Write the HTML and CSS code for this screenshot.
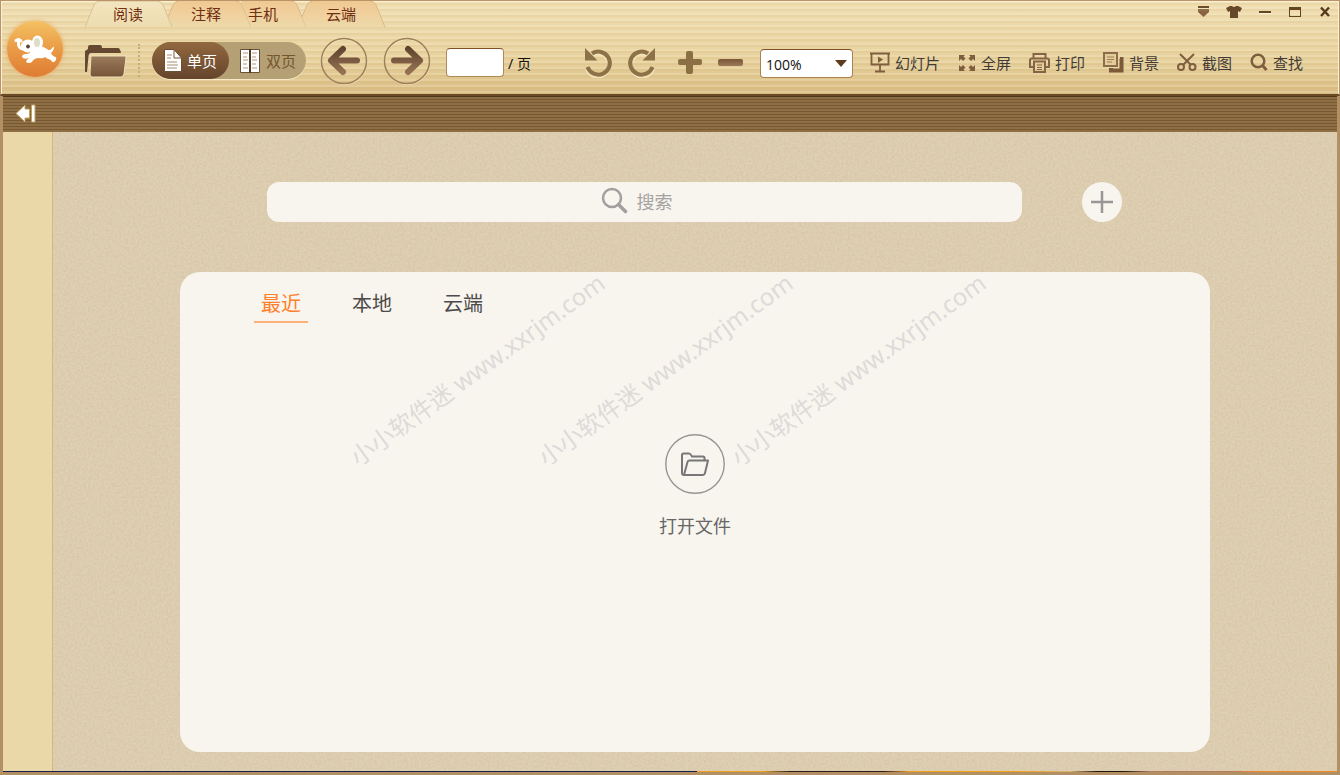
FILE: index.html
```html
<!DOCTYPE html>
<html lang="zh-CN">
<head>
<meta charset="utf-8">
<title>阅读</title>
<link rel="stylesheet" href="styles.css">
</head>
<body>
<div class="window">
  <header class="header">
    <button class="logo" aria-label="主菜单">
      <svg width="44" height="44" viewBox="0 0 44 44" fill="#fff">
        <path d="M3 13.500Q7 11.500 8 14M5.500 14Q4.500 22 11 22" fill="none" stroke="#fff" stroke-width="3" stroke-linecap="round" stroke-linejoin="round"/>
        <ellipse cx="15" cy="19" rx="7" ry="6.500"/>
        <path d="M20 20 Q28 17 34 22 Q37 25 40 20 Q41 19 41 21 Q40 25 38 26 Q40 30 43 30 Q44 33 41 35 Q39 36 38 33 Q34 32 32 30 Q30 32 26 31 Q21 31 19 35 Q16 37 13 35 Q13 33 16 31 Q11 33 9 30 Q9 27 13 27 Q17 27 18 24Z"/>
        <ellipse cx="24.500" cy="15.500" rx="5.500" ry="7"/>
        <ellipse cx="24" cy="15.500" rx="3" ry="4.500" fill="#dfdcc8"/>
        <circle cx="15" cy="19.500" r="1.900" fill="#5a4636"/>
      </svg>
    </button>
    <div class="header-main">
      <div class="title-row">
        <nav class="tabs">
          <button class="tab tab-read"><svg class="tab-shape" viewBox="0 0 88 26" preserveAspectRatio="none"><path d="M0 26 L9 4 Q11 0 15 0 H72 Q76 0 78 4 L87 26" fill="url(#tabLight)" stroke="#d9c295"/></svg><span>阅读</span></button>
          <button class="tab tab-note"><svg class="tab-shape" viewBox="0 0 84 26" preserveAspectRatio="none"><path d="M0 16 L5 4 Q7 0 11 0 H68 Q72 0 74 4 L83 26 H4Z" fill="url(#tabWarm)"/><path d="M0 16 L5 4 Q7 0 11 0 M68 0 Q72 0 74 4 L83 26" fill="none" stroke="#d9b98a"/></svg><span>注释</span></button>
          <button class="tab tab-phone"><svg class="tab-shape" viewBox="0 0 66 26" preserveAspectRatio="none"><path d="M0 0 H50 Q54 0 56 4 L65 26 H10Z" fill="url(#tabWarm)"/><path d="M50 0 Q54 0 56 4 L65 26" fill="none" stroke="#d9b98a"/></svg><span>手机</span></button>
          <button class="tab tab-cloud"><svg class="tab-shape" viewBox="0 0 84 26" preserveAspectRatio="none"><path d="M0 16 L5 4 Q7 0 11 0 H68 Q72 0 74 4 L83 26 H4Z" fill="url(#tabWarm)"/><path d="M0 16 L5 4 Q7 0 11 0 M68 0 Q72 0 74 4 L83 26" fill="none" stroke="#d9b98a"/></svg><span>云端</span></button>
        </nav>
        <div class="window-controls">
          <button aria-label="菜单"><svg width="14" height="14" viewBox="0 0 14 14"><path d="M2 1h11v2H2z" fill="#6c4c2e"/><path d="M2 4h11v2H2z" fill="#8f6c48"/><path d="M2 6h11v1L7.500 12 2 7z" fill="#8a6442"/></svg></button>
          <button aria-label="皮肤"><svg width="16" height="14" viewBox="0 0 16 14"><path d="M0 3 4 1h2q2 2 4 0h2l4 2-2 4-2-1v7H4V6L2 7z" fill="#67482a"/></svg></button>
          <button aria-label="最小化"><svg width="14" height="14" viewBox="0 0 14 14"><path d="M1 6h12v2H1z" fill="#63451f"/><path d="M1 8h12v1H1z" fill="#fff4d8"/></svg></button>
          <button aria-label="最大化"><svg width="14" height="14" viewBox="0 0 14 14"><path d="M1 2h12v10H1zM2 5v6h10V5z" fill="#63451f" fill-rule="evenodd"/></svg></button>
          <button aria-label="关闭"><svg width="14" height="14" viewBox="0 0 14 14"><path d="M3 2.500 11 11M11 2.500 3 11" stroke="#573a1c" stroke-width="2.500"/></svg></button>
        </div>
      </div>
      <div class="toolbar">
        <button class="folder" aria-label="打开">
          <svg width="42" height="34" viewBox="0 0 42 34"><path d="M0 28V7L3 5V3Q3 1 5 1H15Q17 1 17 4H33Q35 4 36 9H6Q4 9 3.500 12L2 28Z" fill="#664730"/><path d="M6 12H40Q41 12 41 14L39 30Q38 33 36 33H7Q5 33 5 30Z" fill="url(#folderFront)" stroke="#f0dfba" stroke-width="1"/></svg>
        </button>
        <span class="divider"></span>
        <div class="page-mode">
          <button class="mode mode-active"><svg width="18" height="24" viewBox="0 0 18 24"><path d="M.500.500H10L17.500 9V22.500H.500Z" fill="#fff" stroke="#6a4f34"/><path d="M10 1V9H17" fill="none" stroke="#765637"/><path d="M3 6h5M3 9h4M3 13h10M3 16h11M3 19h10" stroke="#a58c73"/></svg><span>单页</span></button>
          <button class="mode"><svg width="20" height="24" viewBox="0 0 20 24"><path d="M.500.500H19.500V23.500H.500Z" fill="#fff" stroke="#6a4f34"/><path d="M10 0v24" stroke="#4d3a25" stroke-width="2"/><path d="M3 4h5M3 8h4M3 11h5M3 15h4M3 19h5M12 4h5M12 8h4M12 11h5M12 15h4M12 19h5" stroke="#b5947a"/></svg><span>双页</span></button>
        </div>
        <button class="round" aria-label="上一页"><svg width="48" height="48" viewBox="0 0 48 48" fill="none"><circle cx="24.500" cy="25" r="22.500" stroke="#f6e5bd"/><circle cx="24" cy="24" r="22.500" stroke="#9d8058" stroke-width="1.500"/><path d="M23 12 11 23.500 23 35M11 23.500H37" stroke="url(#arrowFill)" stroke-width="6" stroke-linecap="round" stroke-linejoin="round"/></svg></button>
        <button class="round" aria-label="下一页"><svg width="48" height="48" viewBox="0 0 48 48" fill="none"><circle cx="24.500" cy="25" r="22.500" stroke="#f6e5bd"/><circle cx="24" cy="24" r="22.500" stroke="#9d8058" stroke-width="1.500"/><path d="M25 12 37 23.500 25 35M37 23.500H11" stroke="url(#arrowFill)" stroke-width="6" stroke-linecap="round" stroke-linejoin="round"/></svg></button>
        <label class="page-number"><input type="text" aria-label="页码"><span>/ 页</span></label>
        <div class="edit-tools">
          <button aria-label="向左旋转"><svg width="30" height="30" viewBox="0 0 30 30"><path d="M8 7A11.500 11.500 0 1 1 3 21" fill="none" stroke="#f3e2b8" stroke-width="4"/><path d="M8 5.500A11.500 11.500 0 1 1 3.500 19" fill="none" stroke="#8d7247" stroke-width="4"/><path d="M1 0V12.500H13.500Z" fill="#8d7247"/></svg></button>
          <button aria-label="向右旋转"><svg width="30" height="30" viewBox="0 0 30 30"><path d="M22 7A11.500 11.500 0 1 0 27 21" fill="none" stroke="#f3e2b8" stroke-width="4"/><path d="M22 5.500A11.500 11.500 0 1 0 26.500 19" fill="none" stroke="#8d7247" stroke-width="4"/><path d="M29 0V12.500H16.500Z" fill="#8d7247"/></svg></button>
        </div>
        <div class="zoom-tools">
          <button aria-label="放大"><svg width="26" height="26" viewBox="0 0 26 26"><path d="M11 2h3q2 0 2 2v6h7q2 0 2 2v2q0 2-2 2h-7v7q0 2-2 2h-3q-2 0-2-2v-7H3q-2 0-2-2v-2q0-2 2-2h6V4q0-2 2-2z" fill="#8c7045"/></svg></button>
          <button aria-label="缩小"><svg width="26" height="26" viewBox="0 0 26 26"><rect x="1" y="10" width="25" height="7" rx="2" fill="url(#minusFill)"/></svg></button>
        </div>
        <div class="select-wrap"><select class="zoom-select" aria-label="缩放"><option>100%</option></select><svg class="caret" width="12" height="7" viewBox="0 0 12 7"><path d="M0 0H12L6 7Z" fill="#5c3b1e"/></svg></div>
        <div class="actions">
          <button><svg width="20" height="21" viewBox="0 0 20 21" fill="none" stroke="#7f5e3f"><path d="M0 1.500H20" stroke-width="2"/><path d="M1.500 2V12.500H18.500V2M10 13V19M5 19.500H15" stroke-width="1.800"/><path d="M8 4.500 13 7.500 8 11Z" fill="#7f5e3f" stroke="none"/></svg><span>幻灯片</span></button>
          <button><svg width="18" height="18" viewBox="0 0 18 18" fill="#7f5e3f"><path d="M1 1h6L5.500 2.500 7.500 4.500 5 7 3 5 1 7zM17 1h-6l1.500 1.500L10.500 4.500 13 7l2-2 2 2zM1 17h6l-1.500-1.500L7.500 13.500 5 11 3 13 1 11zM17 17h-6l1.500-1.500L10.500 13.500 13 11l2 2 2-2z"/></svg><span>全屏</span></button>
          <button><svg width="21" height="20" viewBox="0 0 21 20" fill="none" stroke="#866546" stroke-width="1.600"><path d="M4.500 5V1H16.500V5M4.500 14H1V7Q1 5.500 3 5.500H18Q20 5.500 20 7V14H16.500M4 8.500H17M5 9V19H16V9" stroke-width="2"/><path d="M8 12H13M8 14.500H13M8 16.500H13" stroke-width="1"/></svg><span>打印</span></button>
          <button><svg width="21" height="21" viewBox="0 0 21 21" fill="none"><path d="M17 7H18.500V18.500H8V16" stroke="#7b5939" stroke-width="4"/><rect x="1" y="1" width="13" height="13" fill="#e3cc98" stroke="#8e6d4c" stroke-width="2"/><path d="M4 5H11M4 7.500H11M4 10H9" stroke="#9d805e"/></svg><span>背景</span></button>
          <button><svg width="20" height="19" viewBox="0 0 20 19" fill="none" stroke="#7f5e3f" stroke-width="2"><path d="M3 1 14 12M17 1 6 12"/><circle cx="4" cy="14" r="3"/><circle cx="15.500" cy="14" r="3"/></svg><span>截图</span></button>
          <button><svg width="18" height="19" viewBox="0 0 18 19" fill="none" stroke="#7f5e3f"><circle cx="8" cy="8" r="6.300" stroke-width="2.500"/><path d="M12.500 12.500 16.500 17" stroke-width="3"/></svg><span>查找</span></button>
        </div>
      </div>
    </div>
  </header>
  <div class="body">
    <div class="strip"><button class="collapse" aria-label="收起"><svg width="21" height="19" viewBox="0 0 21 19"><path d="M1 9.500 10 1V5H14.500V14H10V18ZM16.500 1h3.500v17h-3.500z" fill="#fff" stroke="#c3a15e" stroke-width="1"/></svg></button></div>
    <div class="content">
      <aside class="sidebar"></aside>
      <main class="workspace">
        <svg class="grain"><filter id="grain"><feTurbulence type="fractalNoise" baseFrequency=".45" numOctaves="2" seed="4"/><feColorMatrix values="0 0 0 0 .45  0 0 0 0 .32  0 0 0 0 .16  .9 0 0 0 -.3"/></filter><rect width="100%" height="100%" filter="url(#grain)"/></svg>
        <div class="search-row">
          <label class="search"><svg width="27" height="30" viewBox="0 0 27 30" fill="none" stroke="#a1a09e"><circle cx="11" cy="11" r="9" stroke-width="2.500"/><path d="M17.500 17.500 24.500 24.500" stroke-width="3.500" stroke-linecap="round"/></svg><input type="text" placeholder="搜索" aria-label="搜索"></label>
          <button class="add" aria-label="添加"><svg width="24" height="24" viewBox="0 0 24 24"><path d="M12 1V23M1 12H23" stroke="#999795" stroke-width="2.500"/></svg></button>
        </div>
        <section class="panel">
          <nav class="file-tabs">
            <button class="file-tab current">最近</button>
            <button class="file-tab">本地</button>
            <button class="file-tab">云端</button>
          </nav>
          <button class="open-file">
            <svg width="60" height="60" viewBox="0 0 60 60" fill="none" stroke="#777"><circle cx="30" cy="30" r="29.200" stroke="#969593" stroke-width="1.400"/><path d="M19 41Q17 41 17 39V21Q17 19.500 18.500 19.500H24Q25.500 19.500 27 22.500H38Q39.500 22.500 39.500 24V26.500" stroke-width="2"/><path d="M19 41 22.500 28Q23 26.500 24.500 26.500H43L40 39Q39.500 41 38 41Z" stroke-width="2" stroke-linejoin="round"/></svg>
            <span>打开文件</span>
          </button>
          <span class="watermark mark-a">小小软件迷 www.xxrjm.com</span>
          <span class="watermark mark-b">小小软件迷 www.xxrjm.com</span>
          <span class="watermark mark-c">小小软件迷 www.xxrjm.com</span>
        </section>
      </main>
    </div>
    <div class="bottom-edge"></div>
  </div>
</div>
<svg class="defs" width="0" height="0">
  <linearGradient id="tabLight" x2="0" y2="1"><stop stop-color="#f3e5c0"/><stop offset="1" stop-color="#eddcae"/></linearGradient>
  <linearGradient id="tabWarm" x2="0" y2="1"><stop stop-color="#f0c992"/><stop offset=".6" stop-color="#f0d2a0"/><stop offset="1" stop-color="#ecd9a9"/></linearGradient>
  <linearGradient id="folderFront" x2="0" y2="1"><stop stop-color="#9c7b5b"/><stop offset="1" stop-color="#765439"/></linearGradient>
  <linearGradient id="arrowFill" gradientUnits="userSpaceOnUse" x1="0" y1="10" x2="0" y2="38"><stop stop-color="#5e422c"/><stop offset="1" stop-color="#9a7656"/></linearGradient>
  <linearGradient id="minusFill" x2="0" y2="1"><stop stop-color="#785636"/><stop offset="1" stop-color="#9c7959"/></linearGradient>
</svg>
</body>
</html>
```
FILE: styles.css
```css
* { box-sizing: border-box; }
body { margin: 0; font-family: "Noto Sans", "Noto Sans CJK SC", sans-serif; }
button { border: 0; padding: 0; margin: 0; background: none; font: inherit; color: inherit; cursor: pointer; display: flex; align-items: center; }
svg { display: block; flex: none; }
.defs { position: absolute; }

.window { min-height: 100vh; display: flex; flex-direction: column; background: #b39064; }

.header {
  display: flex;
  height: 96px;
  border: 1px solid #b89468;
  border-bottom: 2px solid #694b27;
  box-shadow: inset 1px 1px #fbf0d3, inset -1px 0 #fbf0d3;
  background:
    repeating-linear-gradient(rgba(255, 245, 215, .2) 0 2px, rgba(190, 145, 75, .1) 2px 4px, transparent 4px 6px),
    linear-gradient(#f0dfb4, #e8d3a0 60%, #d9bd84);
}
.logo {
  width: 56px; height: 56px; margin: 20px 0 0 6px; flex: none;
  justify-content: center; border-radius: 50%;
  background: linear-gradient(#f5c162, #e99b46 50%, #df7c33);
  box-shadow: 0 0 4px #e9a55c;
}
.header-main { flex: 1; display: flex; flex-direction: column; min-width: 0; }
.title-row { display: flex; justify-content: space-between; height: 26px; padding-left: 22px; }

.tabs { display: flex; font-size: 15px; color: #702f12; }
.tab { position: relative; height: 26px; justify-content: center; }
.tab span { position: relative; line-height: 24px; }
.tab-shape { position: absolute; inset: 0; width: 100%; height: 100%; }
.tab-read { width: 88px; padding-right: 2px; z-index: 1; }
.tab-note { width: 84px; margin-left: -5px; padding-right: 8px; }
.tab-phone { width: 66px; margin-left: -11px; padding-right: 22px; }
.tab-cloud { width: 84px; margin-left: -5px; padding-right: 6px; }

.window-controls { display: flex; gap: 16px; height: 22px; padding-right: 7px; }

.toolbar { display: flex; align-items: center; height: 68px; padding-left: 22px; white-space: nowrap; }
.divider { height: 33px; margin-left: 11px; border-left: 2px dotted #c5ad7d; }
.page-mode { display: flex; margin-left: 12px; height: 37px; border-radius: 19px; background: #b4a074; box-shadow: 0 1px #f7e9c5; font-size: 15px; color: #75552f; }
.mode { gap: 6px; padding: 0 10px 0 11px; border-radius: 19px; }
.mode-active { gap: 5px; padding: 0 12px; background: linear-gradient(#92693f, #65442c); color: #fff; }
.round { margin-left: 15px; }
.page-mode + .round { margin-left: 14px; }

.page-number { display: flex; align-items: center; gap: 4px; margin: 4px 0 0 15px; font-size: 14px; color: #111; }
.page-number input { width: 58px; height: 29px; padding: 0 5px; border: 1px solid #b08b59; border-top-color: #805127; border-radius: 4px; background: #fff; font: inherit; }
.edit-tools { display: flex; gap: 12px; margin: 4px 0 0 53px; }
.zoom-tools { display: flex; gap: 14px; margin: 3px 0 0 21px; }

.select-wrap { position: relative; margin: 6px 0 0 17px; }
.zoom-select { appearance: none; display: block; width: 93px; height: 29px; padding: 2px 5px 0; border: 1px solid #ab8250; border-top-color: #805127; border-radius: 4px; background: #fff; color: #111; font-family: "Open Sans", "Noto Sans", sans-serif; font-size: 14px; }
.caret { position: absolute; right: 6px; top: 11px; pointer-events: none; }

.actions { display: flex; gap: 18px; margin: 4px 0 0 17px; font-size: 15px; color: #423b35; }
.actions button { gap: 5px; }

.body { flex: 1; display: flex; flex-direction: column; padding: 0 3px 3px; }
.strip { display: flex; height: 36px; padding: 0 0 2px 12px; background: repeating-linear-gradient(#755934 0 1px, #8f6e43 1px 3px); box-shadow: inset 0 1px #4f371c; }
.content { flex: 1; display: flex; }
.sidebar { width: 50px; flex: none; border-right: 1px solid #d5b873; background: #ead8a8; }
.workspace { position: relative; flex: 1; display: flex; flex-direction: column; align-items: center; padding: 50px 40px 19px; background: #dfd0b4; }
.grain { position: absolute; inset: 0; width: 100%; height: 100%; opacity: .4; }

.search-row { position: relative; display: flex; gap: 60px; width: 100%; max-width: 1030px; padding: 0 88px 0 87px; }
.search { flex: 1; display: flex; align-items: center; justify-content: center; gap: 9px; height: 40px; border-radius: 12px; background: #f8f5ef; }
.search input { width: 52px; padding: 0; border: 0; outline: 0; background: none; font: inherit; font-size: 18px; color: #555; }
.search input::placeholder { color: #a5a3a0; opacity: 1; }
.add { width: 40px; height: 40px; justify-content: center; border-radius: 50%; background: #f8f5ef; }

.panel { position: relative; flex: 1; width: 100%; max-width: 1030px; margin-top: 50px; border-radius: 20px; background: #f8f5ef; }
.file-tabs { display: flex; gap: 37px; padding: 15px 0 0 74px; font-size: 20px; line-height: 34px; color: #4d4b49; }
.file-tab { padding: 0 7px; border-bottom: 2px solid transparent; }
.file-tab.current { color: #ff812b; border-color: #ffaf78; }
.open-file { position: relative; flex-direction: column; gap: 19px; margin: 111px auto 0; font-size: 18px; line-height: 26px; color: #666; }
.watermark { position: absolute; top: 170px; transform: rotate(-36deg); transform-origin: left center; font-size: 24px; line-height: 36px; color: #dddbd8; white-space: nowrap; pointer-events: none; }
.mark-a { left: 173px; }
.mark-b { left: 361px; }
.mark-c { left: 554px; }

.bottom-edge { height: 1px; background: linear-gradient(90deg, #17204d 0 52%, #eba421 52% 57%, #2d1a1a 59% 66%, #efa31b 68% 76%, #d7b576 80%, #22140f 82% 84%, #b57b63 86% 92%, #f28b27 94%); }
```
